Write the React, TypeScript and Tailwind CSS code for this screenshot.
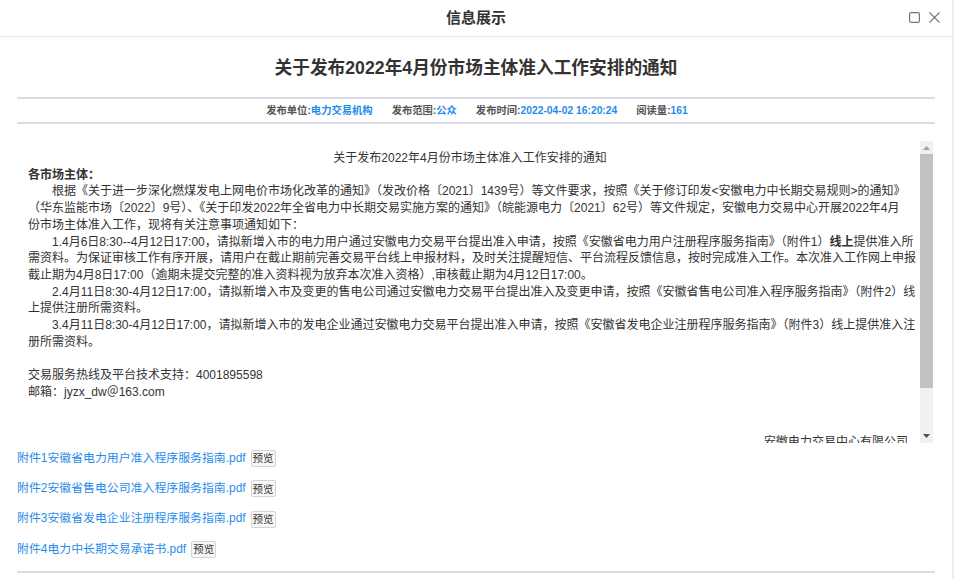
import React from "react";

const FONT = "font-['Liberation_Sans','Noto_Sans_CJK_SC',sans-serif]";

const attachments = [
  "附件1安徽省电力用户准入程序服务指南.pdf",
  "附件2安徽省售电公司准入程序服务指南.pdf",
  "附件3安徽省发电企业注册程序服务指南.pdf",
  "附件4电力中长期交易承诺书.pdf",
];

function Meta({ label, value }: { label: string; value: string }) {
  return (
    <span className="whitespace-nowrap">
      <span className="text-[#555]">{label}:</span>
      <span className="text-[#1f8ceb]">{value}</span>
    </span>
  );
}

function ScrollBar() {
  return (
    <div className="w-[13px] mr-[2px] flex flex-col bg-[#f1f1f1] shrink-0">
      <div className="h-[13px] flex items-center justify-center">
        <svg width="7" height="4" viewBox="0 0 7 4">
          <path d="M0 4 L3.5 0 L7 4 Z" fill="#a3a3a3" />
        </svg>
      </div>
      <div className="h-[234px] bg-[#c1c1c1]" />
      <div className="flex-1" />
      <div className="h-[14px] flex items-center justify-center">
        <svg width="7" height="4" viewBox="0 0 7 4">
          <path d="M0 0 L7 0 L3.5 4 Z" fill="#505050" />
        </svg>
      </div>
    </div>
  );
}

export default function App() {
  return (
    <div className={`flex w-[955px] h-[579px] bg-white overflow-hidden ${FONT}`}>
      <div className="w-[954px] border-r-2 border-[#ececec] flex flex-col">
        {/* Dialog header */}
        <div className="h-[37px] shrink-0 border-b border-[#e6e6e6] flex items-center relative">
          <div className="flex-1 text-center text-[15px] font-bold text-[#333]">信息展示</div>
          <div className="absolute right-[12px] top-[12px] flex items-center gap-[9px]">
            <svg width="11" height="11" viewBox="0 0 11 11">
              <rect x="0.6" y="0.6" width="9.8" height="9.8" rx="1.5" fill="none" stroke="#777" strokeWidth="1.2" />
            </svg>
            <svg width="11" height="11" viewBox="0 0 11 11">
              <path d="M0.5 0.5 L10.5 10.5 M10.5 0.5 L0.5 10.5" stroke="#777" strokeWidth="1.1" />
            </svg>
          </div>
        </div>

        <div className="px-[17px] flex flex-col">
          {/* Title */}
          <h1 className="pt-[19px] pb-[17px] text-center text-[17.7px] leading-[24px] font-bold text-[#333] border-b-2 border-[#dcdce6]">
            关于发布2022年4月份市场主体准入工作安排的通知
          </h1>

          {/* Meta row */}
          <div className="h-[25px] flex items-center justify-center gap-[19px] text-[10.3px] font-bold border-b-2 border-[#dcdce6] pl-[2px]">
            <Meta label="发布单位" value="电力交易机构" />
            <Meta label="发布范围" value="公众" />
            <Meta label="发布时间" value="2022-04-02 16:20:24" />
            <Meta label="阅读量" value="161" />
          </div>

          {/* Content */}
          <div className="mt-[17px] h-[302px] flex">
            <div className="flex-1 overflow-hidden pl-[11px] pr-[8px] pt-[9px] text-[12px] leading-[16.7px] text-[#333] whitespace-nowrap">
              <div className="text-center">关于发布2022年4月份市场主体准入工作安排的通知</div>
              <div className="font-bold">各市场主体：</div>
              <div className="pl-[2em]">
                根据《关于进一步深化燃煤发电上网电价市场化改革的通知》（发改价格〔2021〕1439号）等文件要求，按照《关于修订印发&lt;安徽电力中长期交易规则&gt;的通知》
              </div>
              <div>
                （华东监能市场〔2022〕9号）、《关于印发2022年全省电力中长期交易实施方案的通知》（皖能源电力〔2021〕62号）等文件规定，安徽电力交易中心开展2022年4月
              </div>
              <div>份市场主体准入工作，现将有关注意事项通知如下：</div>
              <div className="pl-[2em]">
                1.4月6日8:30--4月12日17:00，请拟新增入市的电力用户通过安徽电力交易平台提出准入申请，按照《安徽省电力用户注册程序服务指南》（附件1）<span className="font-bold">线上</span>提供准入所
              </div>
              <div>
                需资料。为保证审核工作有序开展，请用户在截止期前完善交易平台线上申报材料，及时关注提醒短信、平台流程反馈信息，按时完成准入工作。本次准入工作网上申报
              </div>
              <div>截止期为4月8日17:00（逾期未提交完整的准入资料视为放弃本次准入资格）,审核截止期为4月12日17:00。</div>
              <div className="pl-[2em]">
                2.4月11日8:30-4月12日17:00，请拟新增入市及变更的售电公司通过安徽电力交易平台提出准入及变更申请，按照《安徽省售电公司准入程序服务指南》（附件2）线
              </div>
              <div>上提供注册所需资料。</div>
              <div className="pl-[2em]">
                3.4月11日8:30-4月12日17:00，请拟新增入市的发电企业通过安徽电力交易平台提出准入申请，按照《安徽省发电企业注册程序服务指南》（附件3）线上提供准入注
              </div>
              <div>册所需资料。</div>
              <div className="h-[16.7px]" />
              <div>交易服务热线及平台技术支持：4001895598</div>
              <div>邮箱：jyzx_dw＠163.com</div>
              <div className="h-[33.4px]" />
              <div className="text-right pr-[4px]">安徽电力交易中心有限公司</div>
            </div>
            <ScrollBar />
          </div>

          {/* Attachments */}
          <div className="mt-[7px] flex flex-col gap-[13.4px] pb-[13px] border-b-2 border-[#dcdce6]">
            {attachments.map((name) => (
              <div key={name} className="h-[17px] flex items-center gap-[5px]">
                <a className="text-[11.9px] text-[#1f8ceb] whitespace-nowrap cursor-pointer">{name}</a>
                <button className="h-[17px] px-[1px] text-[10.5px] leading-none text-[#333] bg-[#f7f7f7] border border-[#d4d4d4] rounded-[2px]">
                  预览
                </button>
              </div>
            ))}
          </div>
        </div>
      </div>
    </div>
  );
}
